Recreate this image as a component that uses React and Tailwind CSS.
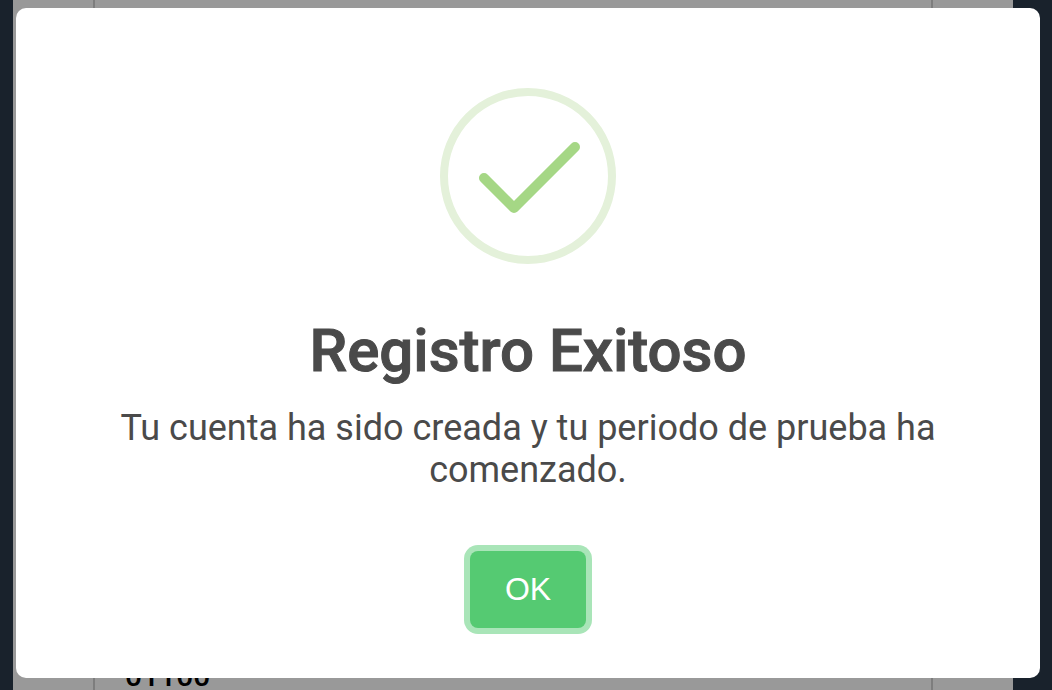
import React from 'react';

const SuccessIcon = () => (
    <svg className="h-44 w-44" viewBox="0 0 176 176" fill="none" aria-hidden="true">
        <circle cx="88" cy="88" r="84" stroke="#e4f1da" strokeWidth="8" />
        <path d="M44 90L74 120L135 59" stroke="#a5d785" strokeWidth="10" strokeLinecap="round" strokeLinejoin="round" />
    </svg>
);

const RegisterPage = () => {
    return (
        <div className="flex h-screen bg-[#19222c] pr-[39px] pl-[13px]">
            <div className="flex flex-1 bg-[#999999] px-20">
                <div className="flex flex-1 items-end border-x-2 border-[#7d7d7d] px-[30px] text-[30px] leading-7 font-medium text-black">
                    <p>01100</p>
                </div>
            </div>
        </div>
    );
};

const SuccessDialog = () => {
    return (
        <div className="fixed inset-0 overflow-hidden pt-2 pr-3 pb-3 pl-4">
            <div
                role="dialog"
                aria-modal="true"
                aria-labelledby="dialog-title"
                aria-describedby="dialog-text"
                className="flex flex-col items-center rounded-[10px] bg-white px-8 pt-20 pb-[50px] text-center text-[#4a4a4a]"
            >
                <SuccessIcon />
                <h2 id="dialog-title" className="mt-[52px] text-[60px] leading-[70px] font-medium [-webkit-text-stroke:1px_#4a4a4a]">
                    Registro Exitoso
                </h2>
                <p id="dialog-text" className="mt-[21px] max-w-[880px] text-[36px] leading-[42px]">
                    Tu cuenta ha sido creada y tu periodo de prueba ha comenzado.
                </p>
                <button
                    type="button"
                    className="mt-[60px] rounded-lg bg-[#55ca72] px-[35px] pt-[18px] pb-[19px] font-['Liberation_Sans',sans-serif] text-[32px] leading-10 text-white ring-6 ring-[#a9e5b8]"
                >
                    OK
                </button>
            </div>
        </div>
    );
};

const App = () => {
    return (
        <div className="font-[Roboto,sans-serif]">
            <RegisterPage />
            <SuccessDialog />
        </div>
    );
};

export default App;
